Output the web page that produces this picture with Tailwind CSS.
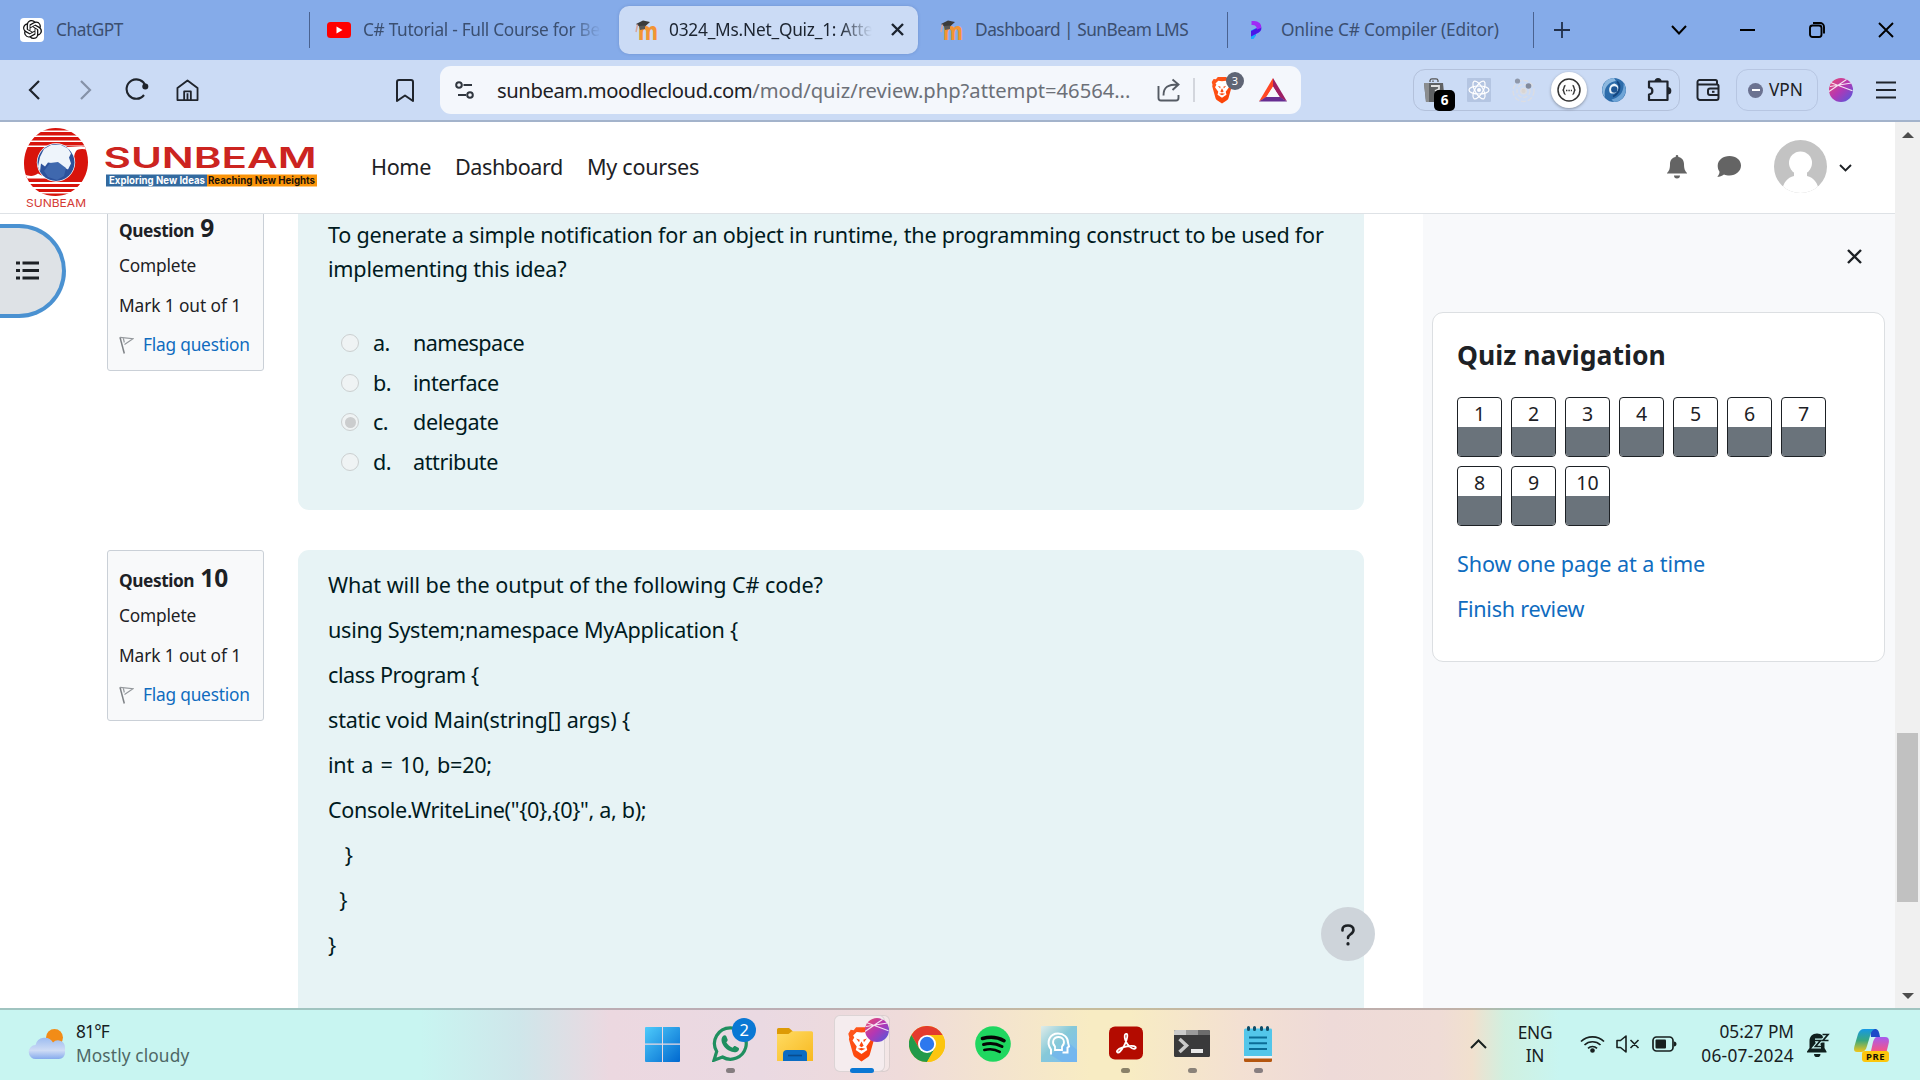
<!DOCTYPE html>
<html lang="en">
<head>
<meta charset="utf-8">
<title>0324_Ms.Net_Quiz_1: Attempt review</title>
<script src="https://cdn.jsdelivr.net/npm/@tailwindcss/browser@4"></script>
</head>
<body class="w-[1920px] h-[1080px] overflow-hidden bg-white font-['Noto_Sans','Open_Sans',sans-serif] text-[#1d2125]">

<!-- shared symbols -->
<svg class="absolute w-0 h-0" aria-hidden="true">
  <defs>
    <linearGradient id="planet" x1="0" y1="0" x2="1" y2="1"><stop offset="0" stop-color="#ec4b6c"/><stop offset=".5" stop-color="#b337b4"/><stop offset="1" stop-color="#4a5be0"/></linearGradient>
    <linearGradient id="bravefill" x1="0" y1="0" x2="1" y2="1"><stop offset="0" stop-color="#ff5a1f"/><stop offset="1" stop-color="#fb3c00"/></linearGradient>
  </defs>
  <symbol id="moodle" viewBox="0 0 24 22">
    <text x="4" y="20.500" font-family="Noto Sans, sans-serif" font-weight="800" font-size="24" textLength="20" lengthAdjust="spacingAndGlyphs" fill="#f29433">m</text>
    <path d="M2 5 9 1.500l7 1.500-5 4.500-5 .5z" fill="#3b3b3b"/><path d="M5 7l6-.5v3.500L6 11z" fill="#565656"/><path d="M3.500 5.500 2 13" stroke="#d9a69a" stroke-width="1.500" fill="none"/>
  </symbol>
  <symbol id="brave" viewBox="0 0 24 30">
    <path d="M7.500 1h9l2 2.500 2.500-.3 2 3.300-.8 3 .3 1.500-3.500 12.500c-.4 1.500-1.500 2.300-2.500 3L12 29.500 7.500 26.500c-1-.7-2.100-1.500-2.500-3L1.500 11l.3-1.500L1 6.500l2-3.300 2.500.3z" fill="url(#bravefill)"/>
    <path d="M12 5.500 8 5 5 8l1 1.500-1.500 2.500 3.500 5-.8 3 4.800 3.300 4.800-3.300-.8-3 3.500-5L18 9.500 19 8l-3-3zM7.500 10.500l3 1-.5 2zm9 0-3 1 .5 2zM12 13l1.800 3.500-1.800 1.300-1.800-1.300zm-3.300 6L12 20.500 15.300 19 12 18.400z" fill="#fff" fill-rule="evenodd"/>
  </symbol>
  <symbol id="globe" viewBox="0 0 24 24">
    <circle cx="12" cy="12" r="12" fill="url(#planet)"/>
    <path d="M1 8.500 22.500 5M2 4.800l21.500 8M0 13.500 17.500 1.500" stroke="#fff" stroke-opacity=".85" stroke-width="1.100" fill="none"/>
  </symbol>
  <symbol id="flag" viewBox="0 0 15 18">
    <path d="M1 1.200 5.300 17.500" stroke="#7d8185" stroke-width="1.500" fill="none"/><path d="M1 1.300l13 1.400-8.500 5.800M4.300 2.200l1 4.300" stroke="#94989c" stroke-width="1.200" fill="none"/>
  </symbol>
</svg>

<!-- browser tabs -->
<div class="flex h-[60px] items-center bg-[#85abe9] text-[17.3px] text-[#3b4f70]">
  <div class="flex w-[309px] items-center pl-5 pb-px">
    <span class="flex size-6 items-center justify-center rounded bg-white"><svg class="size-[19px]" viewBox="0 0 24 24" fill="#111"><path d="M22.282 9.821a5.985 5.985 0 0 0-.516-4.910 6.046 6.046 0 0 0-6.510-2.900A6.065 6.065 0 0 0 4.981 4.182a5.985 5.985 0 0 0-3.998 2.900 6.046 6.046 0 0 0 .743 7.097 5.980 5.980 0 0 0 .511 4.911 6.051 6.051 0 0 0 6.515 2.900A5.985 5.985 0 0 0 13.260 24a6.056 6.056 0 0 0 5.772-4.206 5.989 5.989 0 0 0 3.998-2.900 6.056 6.056 0 0 0-.748-7.073zm-9.022 12.608a4.476 4.476 0 0 1-2.876-1.041l.142-.080 4.778-2.758a.795.795 0 0 0 .393-.681v-6.737l2.020 1.169a.071.071 0 0 1 .038.052v5.583a4.504 4.504 0 0 1-4.495 4.494zm-9.661-4.125a4.471 4.471 0 0 1-.535-3.014l.142.085 4.783 2.758a.771.771 0 0 0 .781 0l5.843-3.369v2.332a.080.080 0 0 1-.033.062L9.740 19.950a4.499 4.499 0 0 1-6.141-1.646zM2.341 7.896a4.485 4.485 0 0 1 2.366-1.973V11.600a.766.766 0 0 0 .388.677l5.814 3.354-2.020 1.169a.076.076 0 0 1-.071 0l-4.830-2.787A4.504 4.504 0 0 1 2.341 7.872zm16.596 3.856L13.104 8.364 15.119 7.200a.076.076 0 0 1 .071 0l4.830 2.791a4.494 4.494 0 0 1-.677 8.104v-5.677a.790.790 0 0 0-.407-.667zm2.011-3.023l-.142-.085-4.774-2.782a.776.776 0 0 0-.785 0L9.409 9.230V6.897a.066.066 0 0 1 .028-.062l4.830-2.787a4.499 4.499 0 0 1 6.680 4.660zM8.307 12.863l-2.020-1.164a.080.080 0 0 1-.038-.057V6.074a4.499 4.499 0 0 1 7.376-3.454l-.142.081L8.704 5.459a.795.795 0 0 0-.393.681zm1.097-2.365l2.602-1.500 2.607 1.500v2.999l-2.597 1.500-2.607-1.500Z"/></svg></span>
    <span class="ml-[12px] tracking-[-0.026em]">ChatGPT</span>
  </div>
  <div class="h-9 w-px bg-[#4a6290]"></div>
  <div class="flex w-[309px] items-center pl-[17px] pb-px">
    <svg class="h-4 w-6 shrink-0" viewBox="0 0 24 16"><rect width="24" height="16" rx="3.500" fill="#f00"/><path d="M9.500 4.500v7l6-3.500z" fill="#fff"/></svg>
    <span class="ml-[12px] w-[238px] overflow-hidden whitespace-nowrap tracking-[-0.018em] [mask-image:linear-gradient(to_right,black_87%,transparent)]">C# Tutorial - Full Course for Beginners</span>
  </div>
  <div class="flex h-12 w-[299px] items-center rounded-[10px] bg-[#cbdbf5] pl-[15px] pb-px text-[#1c2430] shadow-[0_0_3px_rgba(60,90,150,.3)]">
    <svg class="h-[22px] w-6 shrink-0"><use href="#moodle"/></svg>
    <span class="ml-[11px] w-[203px] overflow-hidden whitespace-nowrap tracking-[-0.013em] [mask-image:linear-gradient(to_right,black_84%,transparent)]">0324_Ms.Net_Quiz_1: Attempt review</span>
    <svg class="ml-[19px] size-[13px]" viewBox="0 0 13 13" stroke="#1c2430" stroke-width="2.400"><path d="M1 1l11 11M12 1 1 12"/></svg>
  </div>
  <div class="flex w-[309px] items-center pl-[21px] pb-px">
    <svg class="h-[22px] w-6 shrink-0"><use href="#moodle"/></svg>
    <span class="ml-[12px] whitespace-nowrap tracking-[-0.028em]">Dashboard | SunBeam LMS</span>
  </div>
  <div class="h-9 w-px bg-[#4a6290]"></div>
  <div class="flex w-[305px] items-center pl-[22px] pb-px">
    <svg class="h-[18px] w-3" viewBox="0 0 12 18"><path d="M1 9.500l5-2.500v7.500L3.500 18H1z" fill="#1aa7ff"/><path d="M10.500 4c2 4 .5 7-3.500 8.500L1 15.500V10l6-3z" fill="#4a16e8"/><path d="M1.500 0C8-.5 12 2.500 11 7L7 8.500C7 5.500 5 3.500 1.500 4z" fill="#a02af5"/></svg>
    <span class="ml-[19px] whitespace-nowrap tracking-[-0.009em]">Online C# Compiler (Editor)</span>
  </div>
  <div class="h-9 w-px bg-[#4a6290]"></div>
  <svg class="ml-[20px] size-4" viewBox="0 0 16 16" stroke="#22304a" stroke-width="1.800"><path d="M8 0v16M0 8h16"/></svg>
  <svg class="ml-[101px] h-[10px] w-4" viewBox="0 0 16 10" fill="none" stroke="#000" stroke-width="2"><path d="M1 1l7 7.500L15 1"/></svg>
  <div class="ml-[53px] h-0.5 w-[15px] bg-black"></div>
  <svg class="ml-[54px] size-4" viewBox="0 0 16 16" fill="none" stroke="#000" stroke-width="1.900"><rect x="1" y="3.500" width="11.500" height="11.500" rx="2.500"/><path d="M4 1h7a4 4 0 0 1 4 4v6.500"/></svg>
  <svg class="ml-[53px] size-4" viewBox="0 0 16 16" stroke="#000" stroke-width="1.900"><path d="M1 1l14 14M15 1 1 15"/></svg>
</div>

<!-- toolbar -->
<div class="flex h-[62px] items-center border-b-2 border-[#a3b3cb] bg-[#cbdbf5]">
  <svg class="ml-7 h-5 w-3" viewBox="0 0 12 20" fill="none" stroke="#1f242c" stroke-width="2.200"><path d="M11 1 2 10l9 9"/></svg>
  <svg class="ml-10 h-5 w-3" viewBox="0 0 12 20" fill="none" stroke="#8592a8" stroke-width="2.200"><path d="M1 1l9 9-9 9"/></svg>
  <svg class="ml-[33px] h-[22px] w-6 -translate-y-px" viewBox="0 0 24 22" fill="none" stroke="#1f242c" stroke-width="2.100"><path d="M20.500 8A9.700 9.700 0 1 0 19 17"/><circle cx="20.300" cy="8.500" r="2" fill="#1f242c"/></svg>
  <svg class="ml-[27px] h-[22px] w-[23px]" viewBox="0 0 24 23" fill="none" stroke="#1f242c" stroke-width="1.900" stroke-linejoin="round"><path d="M1.500 9.500 12 1.500l10.500 8V22h-21zM8.500 22v-9h7v9M12 15v7"/></svg>
  <svg class="ml-[197px] h-[23px] w-[18px]" viewBox="0 0 18 23" fill="none" stroke="#1f242c" stroke-width="2" stroke-linejoin="round"><path d="M1 3a2 2 0 0 1 2-2h12a2 2 0 0 1 2 2v19l-8-5.500L1 22z"/></svg>
  <div class="ml-[26px] flex h-12 w-[861px] items-center rounded-[11px] bg-[#f4f7fc]">
    <svg class="ml-[15px] h-[18px] w-5" viewBox="0 0 20 18" fill="none" stroke="#30363f" stroke-width="2"><circle cx="4" cy="4" r="2.800"/><path d="M8.500 4H17M3 14h8"/><circle cx="15" cy="14" r="2.800"/></svg>
    <div class="ml-[22px] w-[650px] whitespace-nowrap text-[20.2px] tracking-[-0.020em]">sunbeam.moodlecloud.com<span class="tracking-[-0.001em] text-[#6c7078]">/mod/quiz/review.php?attempt=46564...</span></div>
    <svg class="ml-[10px] size-6" viewBox="0 0 24 24" fill="none" stroke="#555b64" stroke-width="1.900"><path d="M1.500 8v12a2.500 2.500 0 0 0 2.500 2.500h15a2.500 2.500 0 0 0 2.500-2.500v-3M6.500 17.500C6.500 9 11 6.500 21 6.500M15.500 1.500l6 5-6 5.500"/></svg>
    <div class="ml-[12px] h-6 w-0.5 bg-[#d3d6dd]"></div>
    <div class="relative ml-[15px]">
      <svg class="h-[28px] w-6"><use href="#brave"/></svg>
      <span class="absolute -top-[4px] left-[16px] flex h-[18px] w-[18px] items-center justify-center rounded-full bg-[#5f6575] text-[11px] text-white">3</span>
    </div>
    <svg class="ml-[25px] h-[24px] w-[28px]" viewBox="0 0 28 24"><path d="M14 0v9L7 19.500 0 23.500z" fill="#ff4724"/><path d="M14 0v9l7 10.500 7 4z" fill="#9e1f63"/><path d="M0 23.500h28L21 19H7z" fill="#662d91"/><path d="M14 8.500 7.500 19h13z" fill="#f4f7fc"/></svg>
  </div>
  <div class="ml-[112px] flex h-[42px] w-[267px] items-center rounded-xl border border-[#b3c1db]">
    <div class="relative ml-[9px]">
      <svg class="h-6 w-[23px]" viewBox="0 0 23 24"><path d="M7 4V2.500A2 2 0 0 1 9 .8h4a2 2 0 0 1 2 1.700V4M10 4V2.500" stroke="#555" stroke-width="1.300" fill="none"/><path d="M1 5h19l2 19H3z" fill="#5f6163"/><path d="M1 5h5v19H3z" fill="#8b8d8f"/><path d="M8 8h8v3l-4 2" stroke="#e2e2e2" fill="none" stroke-width="1.800"/></svg>
      <span class="absolute left-[11px] top-[12px] flex size-[21px] items-center justify-center rounded-[5px] bg-black text-[13.500px] font-bold text-white">6</span>
    </div>
    <svg class="ml-[21px] size-6" viewBox="0 0 24 24"><rect width="24" height="24" rx="1" fill="#b4c5e2"/><g fill="none" stroke="#fff" stroke-width="1.200"><ellipse cx="12" cy="12" rx="10" ry="4"/><ellipse cx="12" cy="12" rx="10" ry="4" transform="rotate(60 12 12)"/><ellipse cx="12" cy="12" rx="10" ry="4" transform="rotate(120 12 12)"/></g><circle cx="12" cy="12" r="2" fill="#fff"/></svg>
    <svg class="ml-[20px] size-[25px]" viewBox="0 0 25 25" fill="none" stroke="#dcdde2" stroke-width="1.300"><circle cx="12.500" cy="13" r="10.500" stroke-dasharray="5 2"/><circle cx="12.500" cy="13" r="6.500" stroke-dasharray="4 2"/><circle cx="12.500" cy="13" r="2.800" fill="#d9d5d2"/><circle cx="6.500" cy="3" r="2.600" fill="#8f98aa" stroke="none"/><circle cx="17.500" cy="8" r="2.800" fill="#838b9c" stroke="none"/></svg>
    <div class="ml-[15px] flex size-9 items-center justify-center rounded-full bg-white shadow-[0_1px_3px_rgba(0,0,0,.35)]">
      <svg class="size-6" viewBox="0 0 24 24" fill="none" stroke="#333" stroke-width="1.500"><circle cx="12" cy="12" r="11"/><path d="M8.500 7.500C6 7.500 8 12 5.500 12 8 12 6 16.500 8.500 16.500M15.500 7.500c2.500 0 .5 4.500 3 4.500-2.500 0-.5 4.500-3 4.500"/><path d="M9 12.500h6" stroke-dasharray="1.400 1"/></svg>
    </div>
    <svg class="ml-[15px] size-6" viewBox="0 0 24 24"><circle cx="12" cy="12" r="12" fill="#2c6cab"/><path d="M12 0a12 12 0 0 0-9 19.500C1 9 7 4 14 3c-1-1-1-2-2-3z" fill="#8db8df"/><path d="M12 24a12 12 0 0 0 9.500-19C22.500 14 17 20 9.500 21.500z" fill="#6ea4d6"/><path d="M12.500 5.500c-5 .5-6.500 6-4.500 9.500 3.500 1.500 8 0 8.500-4.500.2-2-1-4-4-5z" fill="#eaf3fb"/><circle cx="12.300" cy="11.500" r="3.200" fill="#1d5593"/><path d="M15 3.500c4 4 3.500 11-4 15" stroke="#15467f" stroke-width="1.800" fill="none"/></svg>
    <svg class="ml-[20px] h-[26px] w-[27px] -mt-[3px]" viewBox="0 0 27 26" fill="none" stroke="#1f242c" stroke-width="2.200" stroke-linejoin="round"><path d="M3 5.500h18.500v18.500H3v-5.500c4.500 0 4.500-7 0-7z"/><path d="M9.500 5.500a2.500 2.500 0 0 1 5 0M21.500 12a2.500 2.500 0 0 1 0 5.500" fill="#1f242c"/></svg>
  </div>
  <svg class="ml-[16px] h-[22px] w-6" viewBox="0 0 24 22" fill="none" stroke="#1f242c" stroke-width="2"><path d="M21 5V2.500A1.500 1.500 0 0 0 19.500 1h-16A2 2 0 0 0 1.500 3v15.500A2.500 2.500 0 0 0 4 21h16.500a2 2 0 0 0 2-2V7a1.500 1.500 0 0 0-1.500-1.500H1.500M22 9.500h-8a2 2 0 0 0-2 2v2.500a2 2 0 0 0 2 2h8"/><path d="M16 12.800h2.500"/></svg>
  <div class="ml-[16px] flex h-[42px] w-[82px] items-center rounded-xl border border-[#b7c6e2]">
    <span class="ml-[11px] flex size-[15px] items-center justify-center rounded-full bg-[#6b7290]"><span class="h-0.5 w-2 bg-white"></span></span>
    <span class="ml-[6px] text-[17.300px]">VPN</span>
  </div>
  <svg class="ml-[11px] size-6"><use href="#globe"/></svg>
  <svg class="ml-[23px] h-[18px] w-5" viewBox="0 0 20 18" stroke="#1f242c" stroke-width="2"><path d="M0 1.500h20M0 9h20M0 16.500h20"/></svg>
</div>

<!-- page -->
<div class="relative flex h-[886px] text-[21.600px]">
  <div class="flex w-[1895px] flex-col">
    <header class="flex h-[92px] items-center border-b border-[#dee2e6] bg-white">
      <svg class="ml-[22px] h-[84px] w-[300px] shrink-0 -translate-y-px" viewBox="22 125 300 84">
        <clipPath id="disc"><path d="M55.500 128c12 0 22 6 28 16 3 5 4.500 12 4.500 18 0 18-14 34-32.500 34-12 0-22-6-27-15-3-5-4.500-11-4.500-17 0-19 13-36 31.500-36z"/></clipPath>
        <g clip-path="url(#disc)">
          <path d="M24 126h64v4.500H24zM24 132h64v3.500H24zM24 137h64v3.500H24zM24 142h64v3.500H24z" fill="#d8140c"/>
          <path d="M24 147h62c-14 0-24-4-38 4-13 8-9 24 1 27H24z" fill="#d8140c"/>
          <path d="M88 147c-8-2-14 3-14 12 0 10-8 18-20 18H24v2h64z" fill="#d8140c"/>
          <path d="M24 179h64v3H24zM24 184h64v3H24zM24 189h64v3H24zM24 193.500h64v4H24z" fill="#d8140c"/>
          <path d="M52 147h36v3c-6-2-11-1-14 2-6-4-14-5-22-5zM60 178.500H24v-4c6 2 10 2 14-1 6 4 14 5 22 5z" fill="#fff"/>
        </g>
        <circle cx="56" cy="162.500" r="19.200" fill="#fff"/><circle cx="56" cy="162.500" r="18.500" fill="#2d529c"/>
        <path d="M40 157l4-8 7-4 9-.5 8 4 3 5-2 4 2 6-3 6-4-2-2 4-5-2-3-6-6-1-3 4-4-3-1 8-2-5z" fill="#eef4fb"/>
        <path d="M50 163l8-1 8 6-2 8-7 4-9-3-4-6z" fill="#3f68ae"/>
        <text x="26" y="206.500" font-family="Inter, sans-serif" font-size="11" textLength="60" lengthAdjust="spacingAndGlyphs" fill="#d43a34">SUNBEAM</text>
        <text x="103.500" y="167.800" font-family="Inter, sans-serif" font-weight="600" font-size="28" textLength="213" lengthAdjust="spacingAndGlyphs" fill="#cc2420">SUNBEAM</text>
        <path d="M106 174.500h101v12H106z" fill="#336a9f"/><path d="M207 174.500h110v12H207z" fill="#fb9409"/>
        <text x="109" y="184.300" font-family="Inter, sans-serif" font-weight="700" font-size="10.500" textLength="96" lengthAdjust="spacingAndGlyphs" fill="#fff">Exploring New Ideas</text>
        <text x="208" y="184.300" font-family="Inter, sans-serif" font-weight="700" font-size="10.500" textLength="107" lengthAdjust="spacingAndGlyphs" fill="#1c1208">Reaching New Heights</text>
      </svg>
      <nav class="ml-[49px] flex grow gap-[24px] whitespace-nowrap">
        <span class="w-[60px] tracking-[-0.017em]">Home</span><span class="w-[108px] tracking-[-0.020em]">Dashboard</span><span class="tracking-[-0.013em]">My courses</span>
      </nav>
      <svg class="mb-0.5 h-[24px] w-5 shrink-0" viewBox="0 0 20 24" fill="#646464"><path d="M10 0c.8 0 1.300.6 1.300 1.300v.7c3.500.7 5.700 3.300 5.700 7 0 5 1 7 3 9v.5H0V18c2-2 3-4 3-9 0-3.700 2.200-6.300 5.700-7v-.7C8.700.6 9.200 0 10 0zM7 20.500h6a3 3 0 0 1-6 0z"/></svg>
      <svg class="ml-[30px] mb-0.5 h-[21px] w-6 shrink-0" viewBox="0 0 24 21" fill="#646464"><path d="M12.500 0C19 0 24 4 24 9.500S19 19.500 12.500 19.500c-2 0-4-.4-5.500-1.100C5 20 2.500 20.800.3 20.800c1.500-1.500 2.200-3.500 2.200-5C1.200 14 .7 12 .7 9.800.7 4 6 0 12.500 0z"/></svg>
      <svg class="ml-[33px] -mt-0.5 size-[53px] shrink-0" viewBox="0 0 53 53"><clipPath id="av"><circle cx="26.500" cy="26.500" r="26.500"/></clipPath><g clip-path="url(#av)"><path d="M0 0h53v53H0z" fill="#c3c3c3"/><circle cx="26.500" cy="23" r="11.500" fill="#fff"/><path d="M20 30h13v6c7 2 11 6 13 19H7c2-13 6-17 13-19z" fill="#fff"/></g></svg>
      <svg class="ml-[12px] mr-[43px] h-2 w-[13px] shrink-0" viewBox="0 0 13 8" fill="none" stroke="#1d2125" stroke-width="1.900"><path d="M1 1l5.500 5.500L12 1"/></svg>
    </header>

    <div class="flex h-[794px] overflow-hidden">
      <main class="w-[1423px] pl-[107px]">
        <section class="-mt-[14px] flex">
          <div class="h-[171px] w-[157px] rounded-[3px] border border-[#cad0d7] bg-[#f8f9fa] pl-[11px] pt-[13px] text-[17.300px] leading-[27px] whitespace-nowrap">
            <h3 class="flex h-[30px] items-baseline gap-[6px] font-bold"><span class="tracking-[-0.025em]">Question</span><span class="text-[24.500px]">9</span></h3>
            <p class="mt-2 tracking-[-0.009em]">Complete</p>
            <p class="mt-[13px] tracking-[-0.005em]">Mark 1 out of 1</p>
            <p class="mt-[12px] flex items-center text-[#0f6cbf]"><svg class="mr-[9px] h-[18px] w-[15px]"><use href="#flag"/></svg><span class="tracking-[-0.012em]">Flag question</span></p>
          </div>
          <div class="ml-[34px] h-[310px] w-[1066px] rounded-[11px] bg-[#e7f3f5] pl-[30px] pt-[18px] leading-[33.750px] text-[#001a1e]">
            <p class="tracking-[-0.010em] whitespace-nowrap">To generate a simple notification for an object in runtime, the programming construct to be used for<br>implementing this idea?</p>
            <div class="mt-[37.500px] pl-[13px]">
              <div class="flex h-[39.700px] items-center"><span class="size-[18px] rounded-full border-[1.500px] border-[#cbcfd0] bg-[#eff3f4]"></span><span class="ml-[14px] w-[40px] tracking-[-0.03em]">a.</span><span class="tracking-[-0.026em]">namespace</span></div>
              <div class="flex h-[39.700px] items-center"><span class="size-[18px] rounded-full border-[1.500px] border-[#cbcfd0] bg-[#eff3f4]"></span><span class="ml-[14px] w-[40px] tracking-[-0.03em]">b.</span><span class="tracking-[-0.022em]">interface</span></div>
              <div class="flex h-[39.700px] items-center"><span class="flex size-[18px] items-center justify-center rounded-full border-[1.500px] border-[#cbcfd0] bg-[#eff3f4]"><span class="size-[11px] rounded-full bg-[#cbcdce]"></span></span><span class="ml-[14px] w-[40px] tracking-[-0.03em]">c.</span><span class="tracking-[-0.018em]">delegate</span></div>
              <div class="flex h-[39.700px] items-center"><span class="size-[18px] rounded-full border-[1.500px] border-[#cbcfd0] bg-[#eff3f4]"></span><span class="ml-[14px] w-[40px] tracking-[-0.03em]">d.</span><span class="tracking-[-0.020em]">attribute</span></div>
            </div>
          </div>
        </section>
        <section class="mt-[40px] flex">
          <div class="h-[171px] w-[157px] rounded-[3px] border border-[#cad0d7] bg-[#f8f9fa] pl-[11px] pt-[13px] text-[17.300px] leading-[27px] whitespace-nowrap">
            <h3 class="flex h-[30px] items-baseline gap-[6px] font-bold"><span class="tracking-[-0.025em]">Question</span><span class="text-[24.500px]">10</span></h3>
            <p class="mt-2 tracking-[-0.009em]">Complete</p>
            <p class="mt-[13px] tracking-[-0.005em]">Mark 1 out of 1</p>
            <p class="mt-[12px] flex items-center text-[#0f6cbf]"><svg class="mr-[9px] h-[18px] w-[15px]"><use href="#flag"/></svg><span class="tracking-[-0.012em]">Flag question</span></p>
          </div>
          <div class="ml-[34px] flex h-[500px] w-[1066px] flex-col gap-[11.250px] rounded-[11px] bg-[#e7f3f5] pl-[30px] pt-[18px] leading-[33.750px] whitespace-pre text-[#001a1e]"><p class="tracking-[-0.003em]">What will be the output of the following C# code?</p><p class="tracking-[-0.013em]">using System;namespace MyApplication {</p><p class="tracking-[-0.019em]">class Program {</p><p class="tracking-[-0.010em]">static void Main(string[] args) {</p><p class="tracking-[-0.012em] [word-spacing:2px]">int a = 10, b=20;</p><p class="tracking-[-0.016em]">Console.WriteLine("{0},{0}", a, b);</p><p>   }</p><p>  }</p><p>}</p></div>
        </section>
      </main>
      <aside class="w-[472px] bg-[#f8f9fb] pl-[9px] pr-[10px]">
        <div class="flex h-[98px] justify-end pr-[23px] pt-[35px]"><svg class="size-[15px]" viewBox="0 0 15 15" stroke="#1d2125" stroke-width="2.400"><path d="M1 1l13 13M14 1 1 14"/></svg></div>
        <div class="h-[350px] rounded-[11px] border border-[#dcdfe2] bg-white pl-6 pt-[25px]">
          <h2 class="text-[26.500px] font-bold leading-[34px] tracking-[0.002em]">Quiz navigation</h2>
          <div id="qn" class="mt-[25px] grid w-[369px] grid-cols-7 gap-[9px] text-center text-[19.500px] leading-[31px]"></div>
          <p class="mt-[21px] leading-[33.750px] tracking-[-0.004em] text-[#0f6cbf]">Show one page at a time</p>
          <p class="mt-[11px] leading-[33.750px] tracking-[-0.012em] text-[#0f6cbf]">Finish review</p>
        </div>
      </aside>
    </div>
  </div>
  <!-- scrollbar -->
  <div class="flex w-[25px] flex-col items-center bg-[#f0f0f0]">
    <svg class="mt-[10px] h-1.5 w-3" viewBox="0 0 12 6"><path d="M0 6 6 0l6 6z" fill="#4d4d4d"/></svg>
    <div class="mt-[595px] h-[169px] w-[21px] bg-[#c1c1c1]"></div>
    <svg class="mt-[91px] h-1.5 w-3" viewBox="0 0 12 6"><path d="M0 0h12L6 6z" fill="#4d4d4d"/></svg>
  </div>
  <!-- floating controls -->
  <div class="absolute left-0 top-[102px] flex h-[94px] w-[66px] items-center rounded-r-[47px] border-y-[4.500px] border-r-[4.500px] border-[#4a91d1] bg-[#dee2e6]">
    <svg class="-mt-0.5 ml-[16px] h-[19px] w-[23px]" viewBox="0 0 23 19" stroke="#1d2125" stroke-width="2.800"><path d="M0 2h4M6.500 2H23M0 9.500h4M6.500 9.500H23M0 17h4M6.500 17H23"/></svg>
  </div>
  <div class="absolute left-[1321px] top-[785px] flex size-[54px] items-center justify-center rounded-full bg-[#ced4da]">
    <svg class="-ml-px mt-px h-[22px] w-[14px]" viewBox="0 0 14 22" fill="none" stroke="#1d2125" stroke-width="2.600" stroke-linecap="round"><path d="M1.500 6.500v-1C1.500 3 3.500 1.500 7 1.500s5.500 1.700 5.500 4.500c0 4.500-5.500 4-5.500 8"/><path d="M7 19.700v.2" stroke-width="3.200"/></svg>
  </div>
</div>

<!-- taskbar -->
<div class="flex h-[72px] items-center border-t-2 border-black/20 bg-[linear-gradient(to_right,#c8f5f1_0,#c8f5f1_420px,#cfe6ea_520px,#ecd8e0_610px,#ead9e2_760px,#efdbda_900px,#f8ecc3_1090px,#f8ecc3_1130px,#f3e0d2_1240px,#eedad8_1330px,#efdcd6_1440px,#f1e0ce_1472px,#d0f0e0_1505px,#c8f5f1_1560px,#c8f5f1_1920px)] bg-origin-border pb-0.5 text-[17.300px] leading-6 text-[#17201f]">
  <svg class="ml-[28px] h-8 w-[38px]" viewBox="0 0 38 32"><defs><linearGradient id="cl" x1="0" y1="0" x2="0" y2="1"><stop offset="0" stop-color="#9dbcf0"/><stop offset=".6" stop-color="#cfdcf5"/><stop offset="1" stop-color="#86abed"/></linearGradient></defs><circle cx="26.500" cy="9.500" r="8.500" fill="#f28c17"/><path d="M8 31a7 7 0 0 1-.5-14A9.500 9.500 0 0 1 25 14.500a7 7 0 0 1 12 5V25a6 6 0 0 1-6 6z" fill="url(#cl)"/></svg>
  <div class="ml-[10px] w-[553px] whitespace-nowrap"><p class="tracking-[-0.045em]">81°F</p><p class="tracking-[0.007em] text-[#4e6765]">Mostly cloudy</p></div>

  <div class="flex h-[70px] w-[662px]">
    <div class="flex w-[66.300px] items-center justify-center"><svg class="size-[35px]" viewBox="0 0 35 35"><defs><linearGradient id="wn" gradientUnits="userSpaceOnUse" x1="0" y1="0" x2="35" y2="35"><stop offset="0" stop-color="#4ecbfb"/><stop offset="1" stop-color="#0068cf"/></linearGradient></defs><path d="M1 0h16v16.500H0V1a1 1 0 0 1 1-1zM18 0h16a1 1 0 0 1 1 1v15.500H18zM0 17.800h17V35H1a1 1 0 0 1-1-1zM18 17.800h17V34a1 1 0 0 1-1 1H18z" fill="url(#wn)"/></svg></div>
    <div class="relative flex w-[66.300px] items-center justify-center"><svg class="ml-1 size-9" viewBox="0 0 36 36"><path d="M18.500 1.800A15.700 15.700 0 1 1 10.500 31L2 34.200 4.700 25.500A15.700 15.700 0 0 1 18.500 1.800z" fill="none" stroke="#1f8f5f" stroke-width="3.200"/><path d="M11 10c1-1.200 2.800-1 3.300.2l1.300 3.200c.3.700-.1 1.400-1.300 2.900 1.500 2.700 3.500 4.400 6.300 5.500 1.300-1.600 1.700-2 2.500-1.700l3.300 1.600c.9.500.8 2-.1 3-1.500 1.600-3.800 2-6.500 1.100-5-1.700-8.700-5.300-10-9.600-.7-2.500-.2-4.900 1.200-6.200z" fill="#1f8f5f"/></svg><span class="absolute left-[37px] top-[9px] flex size-6 items-center justify-center rounded-full bg-[#0a78d4] text-[16.500px] text-white">2</span><span class="absolute bottom-[6px] left-[31px] h-[5px] w-[9px] rounded-full bg-[#857d80]"></span></div>
    <div class="flex w-[66.300px] items-center justify-center"><svg class="h-[33px] w-9" viewBox="0 0 36 33"><defs><linearGradient id="fo" x1="0" y1="0" x2="1" y2="1"><stop offset="0" stop-color="#ffdb63"/><stop offset="1" stop-color="#f8b920"/></linearGradient></defs><path d="M1.500 0H11c1 0 1.500.3 2.200 1L16 3.500V8H0V1.500A1.500 1.500 0 0 1 1.500 0z" fill="#dd9a05"/><path d="M0 6h11.500L15 3.200h19.500A1.500 1.500 0 0 1 36 4.700V33H0z" fill="url(#fo)"/><path d="M6 33v-7a4 4 0 0 1 4-4h16a4 4 0 0 1 4 4v7z" fill="#0b6cc2"/><path d="M11 27.500h14" stroke="#094c8d" stroke-width="1.600"/></svg></div>
    <div class="relative flex w-[66.300px] items-center justify-center"><span class="absolute left-[12px] top-[6px] h-[57px] w-[50px] rounded-md border border-black/10 bg-white/30"></span><span class="absolute left-[6px] top-[6px] h-[57px] w-[51px] rounded-md border border-black/10 bg-[#f5ecee]"></span><svg class="relative ml-px h-9 w-[29px]"><use href="#brave"/></svg><svg class="absolute left-[37px] top-[9px] size-6"><use href="#globe"/></svg><span class="absolute bottom-[6px] left-[22px] h-[5px] w-6 rounded-full bg-[#0a78d4]"></span></div>
    <div class="flex w-[66.300px] items-center justify-center"><svg class="size-9" viewBox="0 0 36 36"><circle cx="18" cy="18" r="18" fill="#fcc50f"/><path d="M2.400 9A18 18 0 0 1 33.600 9H18L10.200 22.500z" fill="#e33b2e"/><path d="M2.400 9A18 18 0 0 0 18 36l7.800-13.500-15.600 0z" fill="#229a4a"/><path d="M33.600 9H18l7.800 13.500L18 36A18 18 0 0 0 33.600 9z" fill="#fcc50f"/><circle cx="18" cy="18" r="9" fill="#fff"/><circle cx="18" cy="18" r="7.200" fill="#2c78ee"/></svg></div>
    <div class="flex w-[66.300px] items-center justify-center"><svg class="size-9" viewBox="0 0 36 36"><circle cx="18" cy="18" r="17.800" fill="#1fd760"/><g fill="none" stroke="#050505" stroke-linecap="round"><path d="M7.500 12.500c7-2 15.500-1.300 21.500 2.200" stroke-width="3.600"/><path d="M8.500 18.500c6-1.700 13-1 18.500 2" stroke-width="3"/><path d="M9.300 24c5-1.300 11-.8 15.500 1.900" stroke-width="2.500"/></g></svg></div>
    <div class="flex w-[66.300px] items-center justify-center"><svg class="size-9" viewBox="0 0 36 36"><defs><linearGradient id="hd" x1="0" y1="0" x2="1" y2="1"><stop offset="0" stop-color="#e0ece8"/><stop offset=".45" stop-color="#86c9d8"/><stop offset="1" stop-color="#7cbcf6"/></linearGradient></defs><path d="M0 0h36v36H0z" fill="url(#hd)"/><path d="M9 28.500l12 7.500h15V24l-8-7z" fill="#6db0f0" opacity=".6"/><path d="M10 28.500v-5C4.500 16 9 7.500 17 7.500c6 0 10 4 10 9l1 4-1.500 1v5h-5" fill="none" stroke="#fff" stroke-width="2"/><path d="M14 24v-3.500c-4-4-1.500-9.500 3.500-9.500s7.500 5.500 3.500 9.500V24z" fill="none" stroke="#fff" stroke-width="1.800"/></svg></div>
    <div class="relative flex w-[66.300px] items-center justify-center"><svg class="mb-[3px] size-[34px]" viewBox="0 0 34 34"><rect width="34" height="33" y=".5" rx="6" fill="#b30b00"/><path d="M16.500 8c2-1 2.500 1.500 1 6-1.200 3.700-4 9-6.500 11.500-1.800 1.800-4 .8-2.700-1 1.700-2.300 8-4.500 14-4.700 4.500-.1 5.500 2 3.500 2.800-2.500 1-8-3.300-9.500-8.500-.8-3-.8-5.500.2-6.100z" fill="none" stroke="#fff" stroke-width="1.800"/></svg><span class="absolute bottom-[6px] left-[29px] h-[5px] w-[9px] rounded-full bg-[#8a8268]"></span></div>
    <div class="relative flex w-[66.300px] items-center justify-center"><svg class="mb-[1px] h-[27px] w-9" viewBox="0 0 36 27"><rect width="36" height="27" rx="1.500" fill="#3a3a3b"/><path d="M1.500 0H12v5H0V1.500A1.500 1.500 0 0 1 1.500 0z" fill="#cbcbcb"/><path d="M12 0h12v5H12z" fill="#9b9b9b"/><path d="M24 0h10.500A1.500 1.500 0 0 1 36 1.500V5H24z" fill="#6c6c6c"/><path d="M5.500 9l7 6.500-7 6.500" fill="none" stroke="#c9c9c9" stroke-width="3.500"/><path d="M17 19h12v4H17z" fill="#e8e8e8"/></svg><span class="absolute bottom-[6px] left-[29px] h-[5px] w-[9px] rounded-full bg-[#8a8279]"></span></div>
    <div class="relative flex w-[66.300px] items-center justify-center"><svg class="h-9 w-7" viewBox="0 0 28 36"><path d="M0 30h28v4.500a1.500 1.500 0 0 1-1.500 1.500h-25A1.500 1.500 0 0 1 0 34.500z" fill="#b5560f"/><path d="M0 28h28v4.500H0z" fill="#f3f3f3"/><path d="M1.500 2.500h25A1.500 1.500 0 0 1 28 4v26H0V4a1.500 1.500 0 0 1 1.500-1.500z" fill="#53c6ea"/><path d="M5 11.500h18M5 17.200h18M5 23h18" stroke="#0b6c96" stroke-width="2"/><path d="M4.500 1.500v2M10.500 1.500v2M17.500 1.500v2M23.500 1.500v2" stroke="#0f4d68" stroke-width="3" stroke-linecap="round"/></svg><span class="absolute bottom-[6px] left-[29px] h-[5px] w-[9px] rounded-full bg-[#877e80]"></span></div>
  </div>

  <svg class="ml-[179px] h-[10px] w-[17px]" viewBox="0 0 17 10" fill="none" stroke="#17201f" stroke-width="2"><path d="M1 9l7.500-7.500L16 9"/></svg>
  <div class="ml-[28px] w-[40px] text-center leading-[23px] tracking-[-0.020em]"><p>ENG</p><p>IN</p></div>
  <svg class="ml-[25px] h-[18px] w-[25px]" viewBox="0 0 25 18" fill="none" stroke="#17201f" stroke-width="1.700"><path d="M1 6.500a16.500 16.500 0 0 1 23 0M4.500 10a11.500 11.500 0 0 1 16 0M8 13.300a6.500 6.500 0 0 1 9 0"/><circle cx="12.500" cy="15.500" r="1.500" fill="#17201f"/></svg>
  <svg class="ml-[11px] h-[18px] w-6" viewBox="0 0 24 18" fill="none" stroke="#17201f" stroke-width="1.600" stroke-linejoin="round"><path d="M1 5.500h3.500L10 1v16l-5.500-4.500H1zM14.500 5l8 8M22.500 5l-8 8"/></svg>
  <svg class="ml-[12px] h-4 w-[25px]" viewBox="0 0 25 16"><rect x="1" y="1" width="20" height="14" rx="3.500" fill="none" stroke="#17201f" stroke-width="1.700"/><rect x="3.500" y="3.500" width="10.500" height="9" rx="1" fill="#17201f"/><path d="M22 5.500c1.500 0 2.500 1 2.500 2.500s-1 2.500-2.500 2.500z" fill="#17201f"/></svg>
  <div class="ml-[17px] w-[100px] text-right whitespace-nowrap"><p class="tracking-[-0.002em]">05:27 PM</p><p class="tracking-[0.014em]">06-07-2024</p></div>
  <svg class="ml-[13px] h-[25px] w-[23px]" viewBox="0 0 23 25" fill="#10201e"><path d="M10 1.500c4.500 0 7.500 3 7.500 7.500v7l2 3.500v1H0v-1L2.500 16V9c0-4.500 3-7.500 7.500-7.500zM7 22h6.500a3.200 3.200 0 0 1-6.500 0z"/><path d="M8 8.500h5.500l-5 6H14" fill="none" stroke="#c8f5f1" stroke-width="4"/><path d="M15.500 2.500H21l-5 6h5.500" fill="none" stroke="#c8f5f1" stroke-width="4"/><path d="M8 8.500h5.500l-5 6H14M15.500 2.500H21l-5 6h5.500" fill="none" stroke="#10201e" stroke-width="1.700"/></svg>
  <div class="relative ml-[24px]">
    <svg class="h-[30px] w-[35px]" viewBox="0 0 35 30"><defs><linearGradient id="cpa" x1="0" y1="0" x2="0" y2="1"><stop offset="0" stop-color="#1598e6"/><stop offset=".5" stop-color="#3aa87e"/><stop offset="1" stop-color="#f2c61a"/></linearGradient><linearGradient id="cpb" x1="0" y1="0" x2="0" y2="1"><stop offset="0" stop-color="#a55bf0"/><stop offset=".6" stop-color="#ee5590"/><stop offset="1" stop-color="#f98a4a"/></linearGradient></defs><path d="M16 0h5c3 0 4 2 5 8h-9z" fill="#1c49c8"/><path d="M10 0h11c-3 1-4 3-5 7l-3 10c-1 4-3 6-6 6H3c-3 0-3.500-2-2.500-6L4 5c1-3 3-5 6-5z" fill="url(#cpa)"/><path d="M23 8h8c4 0 4.500 3 3.500 7l-2 8c-1 4-3 6-6 6H12c3-1 4-3 5-7l2-9c1-3 2-5 4-5z" fill="url(#cpb)"/></svg>
    <span class="absolute left-[8px] top-[22px] flex h-[11px] w-[27px] items-center justify-center rounded-[3px] bg-[#fcc60c] text-[9.500px] font-bold leading-none tracking-[0.06em] text-[#1a1400]">PRE</span>
  </div>
</div>

<script>
  // question navigation buttons
  document.getElementById('qn').innerHTML = Array.from({ length: 10 }, (_, i) =>
    `<div class="flex h-[60px] w-[45px] flex-col overflow-hidden rounded-[4px] border border-[#1d2125]"><span class="h-[29px]">${i + 1}</span><span class="h-[29px] bg-[#6a737b]"></span></div>`).join('');
</script>
</body>
</html>
